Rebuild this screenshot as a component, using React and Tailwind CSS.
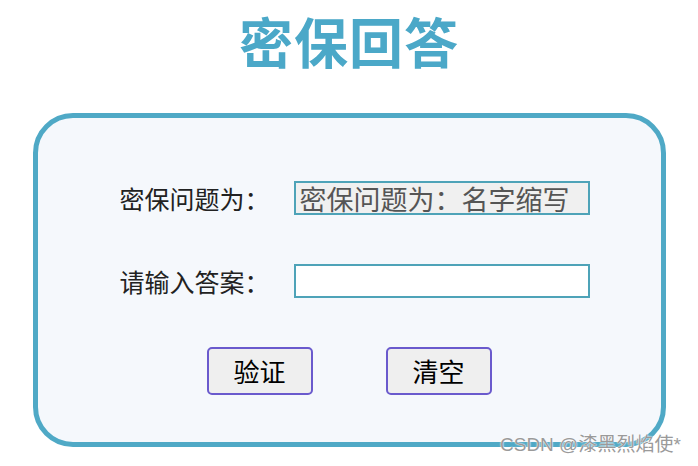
import React, { useState } from "react";

const cjk = "font-['Noto_Sans_CJK_SC',sans-serif]";

const App = () => {
    const [answer, setAnswer] = useState("");

    return (
        <div className={`relative w-[698px] h-[466px] bg-white overflow-hidden ${cjk}`}>
            <h1 className="text-center text-[54px] leading-none font-bold text-[#4ba8c8] pt-[14px] tracking-[1px]">
                密保回答
            </h1>

            <div className="mt-[45px] mx-auto w-[633px] h-[334px] border-[5px] border-[#4fa9c6] rounded-[40px] bg-[#f5f8fc] pt-[63px]">
                <div className="flex items-center h-[34px]">
                    <label className="ml-[82px] w-[174px] text-[25px] text-[#222] leading-none">密保问题为：</label>
                    <div className="w-[296px] h-[34px] border-2 border-[#4ea3b8] bg-[#f0f0f0] flex items-center pl-[4px]">
                        <span className="text-[27px] leading-none text-[#555] whitespace-nowrap">密保问题为：名字缩写</span>
                    </div>
                </div>

                <div className="flex items-center h-[34px] mt-[49px]">
                    <label className="ml-[82px] w-[174px] text-[25px] text-[#222] leading-none">请输入答案：</label>
                    <input
                        value={answer}
                        onChange={(e) => setAnswer(e.target.value)}
                        className="w-[296px] h-[34px] border-2 border-[#4ea3b8] bg-white px-[4px] text-[24px] outline-none"
                    />
                </div>

                <div className="flex justify-center gap-[73px] mt-[49px]">
                    <button
                        type="button"
                        className="w-[106px] h-[48px] border-2 border-[#6a5acd] rounded-[5px] bg-[#efefef] text-[26px] text-black leading-none"
                    >
                        验证
                    </button>
                    <button
                        type="button"
                        onClick={() => setAnswer("")}
                        className="w-[106px] h-[48px] border-2 border-[#6a5acd] rounded-[5px] bg-[#efefef] text-[26px] text-black leading-none"
                    >
                        清空
                    </button>
                </div>
            </div>

            <div className="absolute left-[500px] top-[435px] text-[19px] leading-none text-[#9a9a9a] whitespace-nowrap font-['Liberation_Sans','Noto_Sans_CJK_SC',sans-serif] [text-shadow:0_0_2px_#fff,0_0_1px_#fff]">
                CSDN @漆黑烈焰使*
            </div>
        </div>
    );
};

export default App;
